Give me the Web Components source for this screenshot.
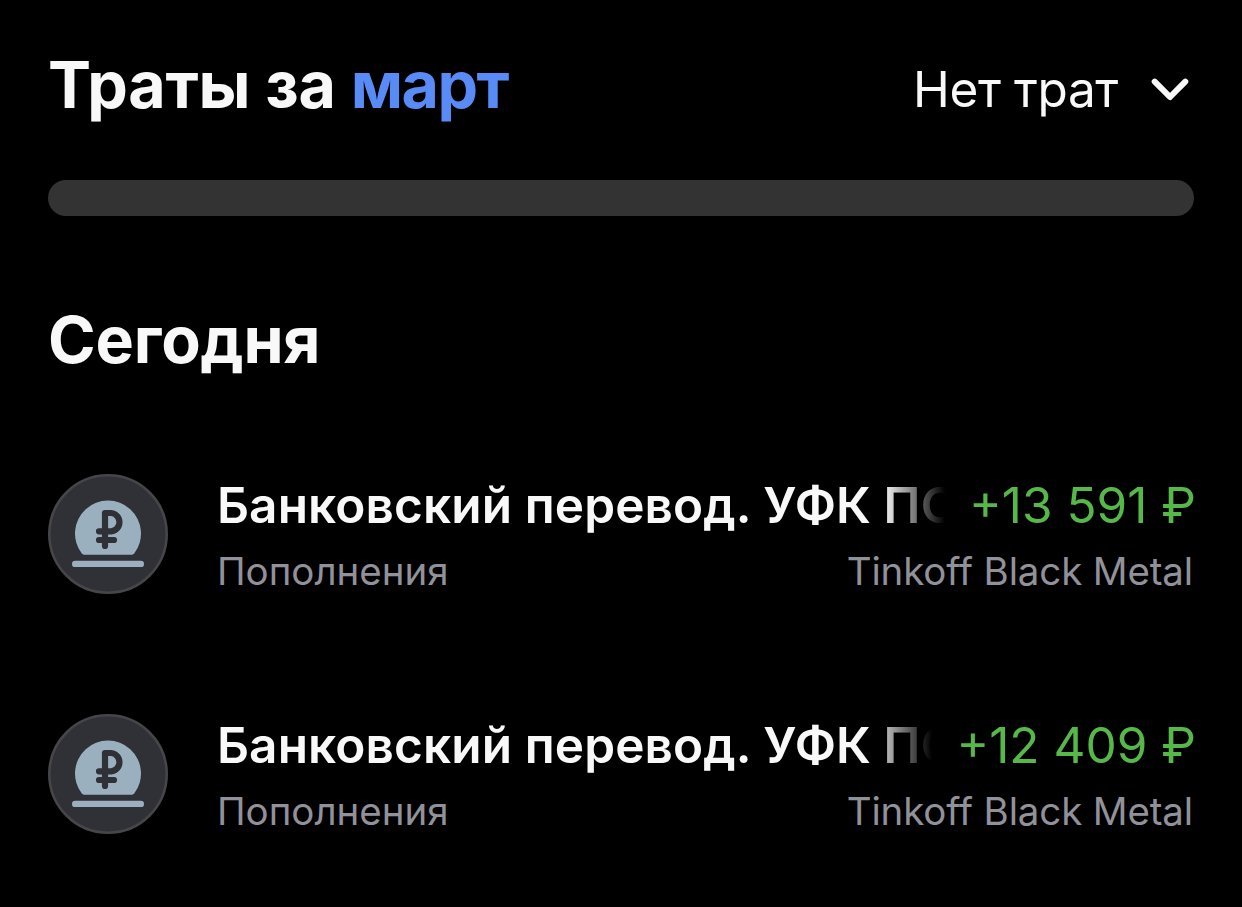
<!DOCTYPE html>
<html lang="ru">
<head>
<meta charset="utf-8">
<title>Траты за март</title>
<style>
    body {
        margin: 0;
        background: #000;
        color: #f8f8f8;
        font-family: Inter, "Liberation Sans", sans-serif;
    }
</style>
</head>
<body>

<operations-page>
    <spending-header slot="header" total="Нет трат">Траты за <span>март</span></spending-header>
    <spending-bar slot="header"></spending-bar>
    <operations-day label="Сегодня">
        <operation-row category="Пополнения" amount="+13 591 ₽" account="Tinkoff Black Metal">Банковский перевод. УФК ПО</operation-row>
        <operation-row category="Пополнения" amount="+12 409 ₽" account="Tinkoff Black Metal">Банковский перевод. УФК ПО</operation-row>
    </operations-day>
</operations-page>

<script>
/** Base class: clones the template and fills [data-attr] nodes from attributes */
class BaseElement extends HTMLElement {
    constructor() {
        super()
        const template = document.createElement('template')
        template.innerHTML = this.constructor.html
        this.attachShadow({ mode: 'open' })
            .append(template.content.cloneNode(true))
    }

    connectedCallback() {
        this.shadowRoot.querySelectorAll('[data-attr]').forEach((el) => {
            el.textContent = this.getAttribute(el.dataset.attr) || ''
        })
    }
}

class OperationsPage extends BaseElement {
    static html = /*html*/`
        <style>
            :host {
                display: flex;
                flex-direction: column;
                box-sizing: border-box;
                width: 1242px;
                height: 907px;
                padding: 45px 48px 0;
                overflow: hidden;
            }
        </style>
        <slot name="header"></slot>
        <slot></slot>
    `
}

class SpendingHeader extends BaseElement {
    static html = /*html*/`
        <style>
            :host {
                display: flex;
                justify-content: space-between;
                height: 80px;
            }
            h1 {
                margin: 0;
                font-size: 64.5px;
                font-weight: 700;
                line-height: 80px;
                letter-spacing: -0.25px;
                white-space: nowrap;
            }
            ::slotted(span) {
                color: #598bf7;
                letter-spacing: -1.6px;
            }
            .total {
                display: flex;
                gap: 33px;
                padding-right: 5px;
                font-size: 49.5px;
                line-height: 88px;
                letter-spacing: -0.4px;
                white-space: nowrap;
            }
            svg {
                margin-top: 31px;
            }
        </style>
        <h1><slot></slot></h1>
        <div class="total">
            <span data-attr="total"></span>
            <svg width="38" height="28" viewBox="0 0 38 28" fill="none" stroke="#f8f8f8" stroke-width="6" stroke-linecap="round" stroke-linejoin="round">
                <path d="M3.7 5.6 19 21 34.3 5.6"/>
            </svg>
        </div>
    `
}

class SpendingBar extends BaseElement {
    static html = /*html*/`
        <style>
            :host {
                display: block;
                height: 36px;
                margin-top: 55px;
                border-radius: 18px;
                background: #333;
            }
        </style>
    `
}

class OperationsDay extends BaseElement {
    static html = /*html*/`
        <style>
            :host {
                display: block;
                margin-top: 84px;
            }
            h2 {
                margin: 0 0 94px;
                font-size: 64.5px;
                font-weight: 700;
                line-height: 80px;
                letter-spacing: -0.2px;
            }
            .rows {
                display: flex;
                flex-direction: column;
                gap: 120px;
            }
        </style>
        <h2 data-attr="label"></h2>
        <div class="rows"><slot></slot></div>
    `
}

class TopUpIcon extends BaseElement {
    static html = /*html*/`
        <style>
            :host {
                display: block;
                width: 120px;
                height: 120px;
            }
            svg {
                display: block;
            }
        </style>
        <svg width="120" height="120" viewBox="0 0 120 120" fill="none">
            <circle cx="60" cy="60" r="58.7" fill="#303136" stroke="#464649" stroke-width="2.6"/>
            <path d="M36 80.7Q34.6 80.7 33.8 79.6A33 33 0 1 1 86.2 79.6Q85.4 80.7 84 80.7Z" fill="#9ab0bf"/>
            <rect x="24" y="86.7" width="72" height="6.4" rx="3.2" fill="#9ab0bf"/>
            <path d="M57 72V39H63.2a9.2 9.2 0 0 1 0 18.3H51M51 66H66" stroke="#303136" stroke-width="6.2" stroke-linecap="round" stroke-linejoin="round"/>
        </svg>
    `
}

class OperationRow extends BaseElement {
    static html = /*html*/`
        <style>
            :host {
                display: flex;
                height: 120px;
            }
            .text {
                flex: 1;
                min-width: 0;
                padding: 1px 0 0 49px;
            }
            .line {
                display: flex;
                justify-content: space-between;
                white-space: nowrap;
            }
            .main {
                gap: 24px;
                margin-right: -2px;
                font-size: 49.5px;
                line-height: 60px;
            }
            .name {
                flex: 1;
                min-width: 0;
                overflow: hidden;
                font-weight: 600;
                letter-spacing: 0.12px;
                -webkit-mask-image: linear-gradient(to left, transparent, #000 62px);
                mask-image: linear-gradient(to left, transparent, #000 62px);
            }
            .amount {
                color: #57b84a;
            }
            .sub {
                margin: 12px 1px 0 0;
                font-size: 38.5px;
                line-height: 48px;
                color: #919199;
            }
            .account {
                letter-spacing: -0.15px;
            }
        </style>
        <top-up-icon></top-up-icon>
        <div class="text">
            <div class="line main">
                <span class="name"><slot></slot></span>
                <span class="amount" data-attr="amount"></span>
            </div>
            <div class="line sub">
                <span class="category" data-attr="category"></span>
                <span class="account" data-attr="account"></span>
            </div>
        </div>
    `
}

customElements.define('operations-page', OperationsPage)
customElements.define('spending-header', SpendingHeader)
customElements.define('spending-bar', SpendingBar)
customElements.define('operations-day', OperationsDay)
customElements.define('top-up-icon', TopUpIcon)
customElements.define('operation-row', OperationRow)
</script>
</body>
</html>
